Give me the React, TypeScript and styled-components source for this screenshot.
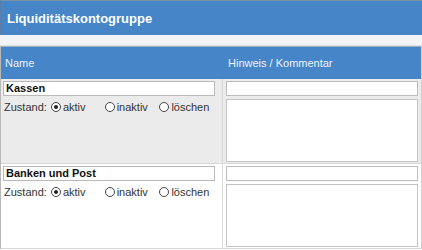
import React from "react";
import styled, { createGlobalStyle } from "styled-components";

const Global = createGlobalStyle`
  html, body { margin: 0; padding: 0; background: #fff; }
  body { font-family: "Liberation Sans", Arial, sans-serif; font-size: 11px; color: #222; }
`;

const Page = styled.div`
  width: 422px;
  display: flex;
  flex-direction: column;
`;

const TitleBar = styled.div`
  height: 35px;
  box-sizing: border-box;
  background: #4585c8;
  border-top: 1px solid #7a8ea4;
  border-left: 1px solid #5b7fa8;
  display: flex;
  align-items: center;
  padding-left: 6px;
  color: #fff;
  font-weight: bold;
  font-size: 13px;
`;

const Spacer = styled.div`
  height: 10px;
  background: #f3f4f6;
  border-bottom: 1px solid #dfe3e8;
`;

const Table = styled.div`
  display: grid;
  grid-template-columns: 221px 1fr;
  border-left: 1px solid #b8b8b8;
  border-right: 1px solid #d0d0d0;
`;

const HeadCell = styled.div<{ $pl: number }>`
  height: 33px;
  box-sizing: border-box;
  background: #4585c8;
  color: #eef4fb;
  display: flex;
  align-items: center;
  padding-left: ${(p) => p.$pl}px;
  font-size: 11px;
  border-top: 1px solid #9db0c4;
`;

const Cell = styled.div<{ $bg: string; $right?: boolean }>`
  background: ${(p) => p.$bg};
  padding: ${(p) => (p.$right ? "2px 3px 1px 3px" : "2px 4px 1px 2px")};
  display: flex;
  flex-direction: column;
  gap: ${(p) => (p.$right ? 3 : 4)}px;
  border-bottom: 1px solid #d8d8d8;
  ${(p) => (p.$right ? "border-left: 1px solid #d9d9d9;" : "")}
`;

const NameInput = styled.div`
  height: 15px;
  box-sizing: border-box;
  background: #fff;
  border: 1px solid #b9b9b9;
  font-weight: bold;
  font-size: 11px;
  color: #111;
  padding-left: 2px;
  line-height: 13px;
  margin-right: 3px;
`;

const TextInput = styled.div`
  height: 15px;
  box-sizing: border-box;
  background: #fff;
  border: 1px solid #bdbdbd;
`;

const TextArea = styled.div`
  height: 63px;
  box-sizing: border-box;
  background: #fff;
  border: 1px solid #c4c4c4;
`;

const StateRow = styled.div`
  display: flex;
  align-items: center;
  height: 14px;
  padding-left: 1px;
  color: #333;
  font-size: 11px;
`;

const Label = styled.span`
  width: 48px;
`;

const Option = styled.label<{ $w: number }>`
  display: flex;
  align-items: center;
  gap: 2px;
  width: ${(p) => p.$w}px;
`;

const Radio = styled.span<{ $on?: boolean }>`
  width: 10px;
  height: 10px;
  box-sizing: border-box;
  border: 1px solid #444;
  border-radius: 50%;
  display: inline-flex;
  align-items: center;
  justify-content: center;
  background: #fff;
  &::after {
    content: "";
    width: 4px;
    height: 4px;
    border-radius: 50%;
    background: ${(p) => (p.$on ? "#222" : "transparent")};
  }
`;

const groups = [
  { name: "Kassen", bg: "#ebebeb" },
  { name: "Banken und Post", bg: "#ffffff" },
];

export default function App() {
  return (
    <Page>
      <Global />
      <TitleBar>Liquiditätskontogruppe</TitleBar>
      <Spacer />
      <Table>
        <HeadCell $pl={4}>Name</HeadCell>
        <HeadCell $pl={6}>Hinweis / Kommentar</HeadCell>
        {groups.map((g) => (
          <React.Fragment key={g.name}>
            <Cell $bg={g.bg}>
              <NameInput>{g.name}</NameInput>
              <StateRow>
                <Label>Zustand:</Label>
                <Option $w={55}>
                  <Radio $on />
                  aktiv
                </Option>
                <Option $w={56}>
                  <Radio />
                  inaktiv
                </Option>
                <Option $w={60}>
                  <Radio />
                  löschen
                </Option>
              </StateRow>
            </Cell>
            <Cell $bg={g.bg} $right>
              <TextInput />
              <TextArea />
            </Cell>
          </React.Fragment>
        ))}
      </Table>
    </Page>
  );
}
